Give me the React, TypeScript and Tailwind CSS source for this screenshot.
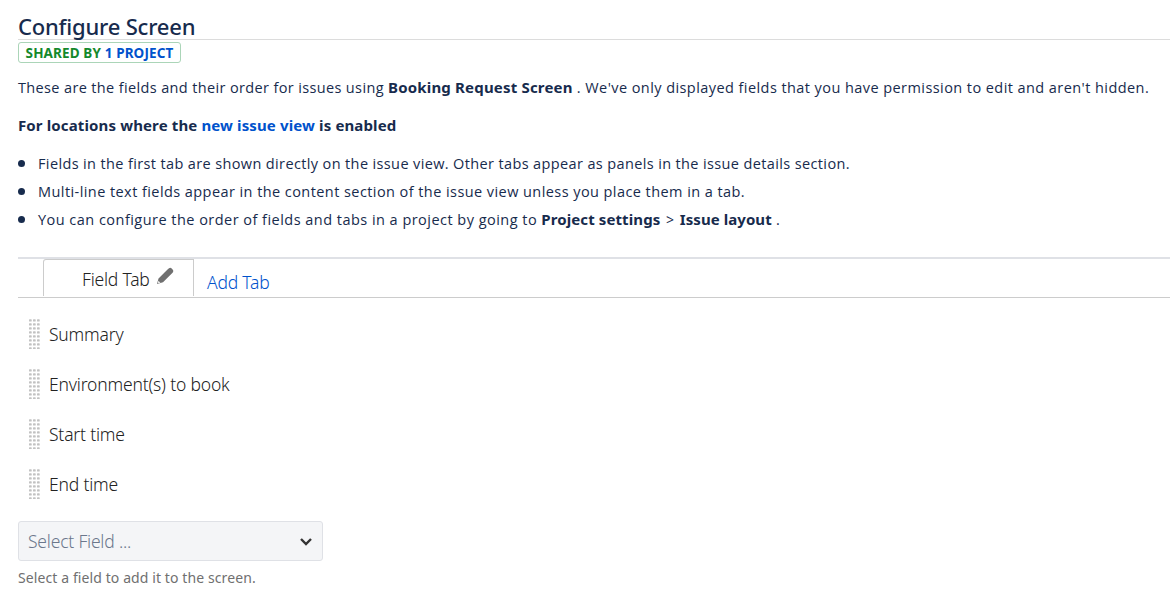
import React from "react";

const fields = ["Summary", "Environment(s) to book", "Start time", "End time"];

function Grip() {
  return (
    <svg width="11" height="30" viewBox="0 0 11 30" className="shrink-0" fill="#c2c2c2">
      {Array.from({ length: 8 }).flatMap((_, r) =>
        [0, 1, 2].map((c) => <rect key={r + "-" + c} x={c * 4} y={r * 4 + 0.3} width="2.7" height="2.3" rx="0.6" />)
      )}
    </svg>
  );
}

function Item({ children }: { children: React.ReactNode }) {
  return (
    <li className="flex h-7 items-center">
      <i className="mr-[13px] size-[7px] rounded-full bg-[#172b4d]" />
      {children}
    </li>
  );
}

export default function App() {
  return (
    <main className="h-[604px] w-full overflow-hidden bg-white pl-[18px] font-['Noto_Sans',sans-serif] text-[#172b4d]">
      <header className="h-10 border-b border-[#dcdcdc] pt-[10px]">
        <h1 className="text-[22px] leading-8 font-medium tracking-[-0.2px] whitespace-nowrap">Configure Screen</h1>
      </header>
      <div className="mt-[2px] flex h-[21px] w-[163px] items-center justify-center rounded-[3px] border border-[#abd5b8] pt-px text-[13.5px] font-bold tracking-[0.12px] whitespace-nowrap text-[#14892c]">
        <span>SHARED BY <a className="text-[#0052cc]">1 PROJECT</a></span>
      </div>
      <p className="mt-[10px] h-7 pt-px font-['Open_Sans',sans-serif] text-[14.5px] leading-7 tracking-[0.43px] whitespace-nowrap">
        <span className="tracking-[0.36px]">These are the fields and their order for issues using </span>
        <b className="font-['Noto_Sans',sans-serif] text-[15px] leading-none font-bold tracking-[0.18px]">Booking Request Screen</b> . We've only displayed fields that you have permission to edit and aren't hidden.
      </p>
      <p className="mt-[10px] text-[15px] leading-7 font-bold tracking-[0.13px] whitespace-nowrap">
        For locations where the <a className="text-[#0052cc]">new issue view</a> is enabled
      </p>
      <ul className="mt-[10px] font-['Open_Sans',sans-serif] text-[14.5px] leading-7 whitespace-nowrap">
        <Item>
          <span className="pt-[2px] tracking-[0.37px]">Fields in the first tab are shown directly on the issue view. Other tabs appear as panels in the issue details section.</span>
        </Item>
        <Item>
          <span className="pt-[2px] tracking-[0.43px]">Multi-line text fields appear in the content section of the issue view unless you place them in a tab.</span>
        </Item>
        <Item>
          <span className="pt-[2px] tracking-[0.47px]">
            You can configure the order of fields and tabs in a project by going to{" "}
            <b className="font-['Noto_Sans',sans-serif] text-[15px] leading-none font-bold tracking-[0.1px]">Project settings</b>
            <span className="mx-[5.5px] text-[14px] leading-none font-medium">&gt;</span>
            <b className="font-['Noto_Sans',sans-serif] text-[15px] leading-none font-bold tracking-[0.06px]">Issue layout</b> .
          </span>
        </Item>
      </ul>
      <nav className="mt-6 flex h-[41px] items-start border-t-2 border-b border-t-[#dfe1e6] border-b-[#cccccc] pl-[25px] text-[17.5px] font-light tracking-[-0.2px] whitespace-nowrap">
        <div className="flex h-[37px] w-[151px] items-start rounded-tl-[3px] border border-b-0 border-[#cccccc] pl-[38px] text-[#222222]">
          <span className="mt-[5px] leading-7">Field Tab</span>
          <svg className="mt-[7px] ml-[6px]" width="18" height="18" viewBox="0 0 18 18" fill="#707070">
            <path d="M1 17 2.5 11.5 11.5 2.6 13 1.3Q14.4.3 15.7 1.5L16.8 2.7Q18 4 16.8 5.4L7 15.2Z" />
            <path d="m2.3 13.7 2.2 2-2.6.5Z" fill="#eeeeee" />
          </svg>
        </div>
        <a className="mt-[9px] ml-[13px] leading-7 text-[#0052cc]">Add Tab</a>
      </nav>
      <ul className="mt-[11px] text-[17.5px] font-light tracking-[-0.18px] text-[#222222]">
        {fields.map((f) => (
          <li key={f} className="flex h-[50px] items-center gap-[9px] pl-[11px]">
            <Grip />
            <span>{f}</span>
          </li>
        ))}
      </ul>
      <button className="mt-[12px] flex h-10 w-[305px] items-center justify-between rounded-[3px] border border-[#dfe1e6] bg-[#f4f5f7] pr-[10px] pl-[9px] text-[17.5px] font-light tracking-[-0.2px] text-[#6b778c]">
        <span>Select Field ...</span>
        <svg className="relative top-px" width="12" height="8" viewBox="0 0 12 8" fill="none" stroke="#333" strokeWidth="2.4">
          <path d="M1 1 6 6 11 1" />
        </svg>
      </button>
      <p className="mt-[6px] text-[14px] leading-[22px] tracking-[0.1px] text-[#707070]">Select a field to add it to the screen.</p>
    </main>
  );
}
